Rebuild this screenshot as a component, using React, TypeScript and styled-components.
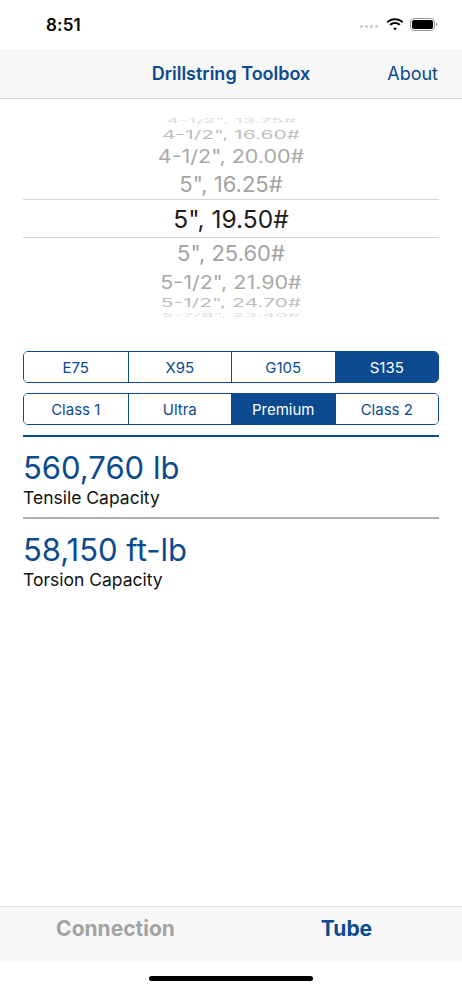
import React, { useState } from 'react'
import styled, { createGlobalStyle } from 'styled-components'

const BLUE = '#0b4a8e'

const GlobalStyle = createGlobalStyle`
    html, body {
        margin: 0;
        padding: 0;
        background: #ffffff;
    }
    body {
        font-family: Inter, "Noto Sans", "Liberation Sans", sans-serif;
        -webkit-font-smoothing: antialiased;
    }
`

const Screen = styled.div`
    width: 462px;
    height: 1000px;
    display: flex;
    flex-direction: column;
    background: #ffffff;
    overflow: hidden;
`

const StatusBar = styled.div`
    height: 49px;
    display: flex;
    align-items: center;
    justify-content: space-between;
    padding: 0 24px 0 46px;
    box-sizing: border-box;
`

const Clock = styled.span`
    font-size: 17px;
    font-weight: 600;
    color: #000;
    letter-spacing: 0.2px;
`

const StatusIcons = styled.div`
    display: flex;
    align-items: center;
    gap: 6px;
`

const Dot = styled.span`
    width: 3px;
    height: 3px;
    border-radius: 50%;
    background: #c8c8c8;
`

const Dots = styled.div`
    display: flex;
    gap: 2px;
    margin-right: 2px;
    margin-top: 3px;
`

const NavBar = styled.div`
    height: 49px;
    background: #f7f7f7;
    border-bottom: 1px solid #d6d6d6;
    display: grid;
    grid-template-columns: 1fr auto 1fr;
    align-items: center;
    padding: 0 24px;
`

const NavTitle = styled.div`
    grid-column: 2;
    font-size: 18px;
    font-weight: 600;
    color: ${BLUE};
`

const NavAction = styled.div`
    justify-self: end;
    font-size: 18px;
    color: ${BLUE};
`

const Picker = styled.div`
    margin: 16px 23px 0;
    display: flex;
    flex-direction: column;
    height: 205px;
`

const PickerRow = styled.div<{ h: number; size: number; sy: number; tone: string }>`
    height: ${({ h }) => h}px;
    display: flex;
    align-items: center;
    justify-content: center;
    font-size: ${({ size }) => size}px;
    color: ${({ tone }) => tone};
    transform: scaleY(${({ sy }) => sy});
    overflow: visible;
    white-space: nowrap;
`

const PickerSelected = styled.div`
    height: 38px;
    border-top: 1px solid #d4d4d4;
    border-bottom: 1px solid #d4d4d4;
    display: flex;
    align-items: center;
    justify-content: center;
    font-size: 24.5px;
    color: #1c1c1c;
`

const Segments = styled.div<{ top: number }>`
    margin: ${({ top }) => top}px 23px 0;
    height: 32px;
    display: grid;
    grid-template-columns: repeat(4, 1fr);
    border: 1px solid ${BLUE};
    border-radius: 5px;
    overflow: hidden;
    box-sizing: border-box;
`

const Segment = styled.div<{ active: boolean }>`
    display: flex;
    align-items: center;
    justify-content: center;
    font-size: 15px;
    color: ${({ active }) => (active ? '#ffffff' : BLUE)};
    background: ${({ active }) => (active ? BLUE : '#ffffff')};
    & + & {
        border-left: 1px solid ${BLUE};
    }
    cursor: pointer;
`

const Rule = styled.div<{ tone: string; top?: number }>`
    margin: ${({ top }) => top ?? 0}px 23px 0;
    height: 2px;
    background: ${({ tone }) => tone};
`

const Result = styled.div`
    padding: 13px 23px 9px;
`

const ResultValue = styled.div`
    font-size: 31px;
    color: ${BLUE};
    line-height: 36px;
`

const ResultLabel = styled.div`
    font-size: 17.5px;
    color: #111;
    margin-top: 1px;
`

const Spacer = styled.div`
    flex: 1;
`

const TabBar = styled.div`
    height: 55px;
    background: #f7f7f7;
    border-top: 1px solid #dcdcdc;
    display: grid;
    grid-template-columns: 1fr 1fr;
    align-items: start;
`

const Tab = styled.div<{ active: boolean }>`
    text-align: center;
    padding-top: 9px;
    font-size: 21px;
    font-weight: 700;
    color: ${({ active }) => (active ? BLUE : '#a3a3a3')};
`

const HomeArea = styled.div`
    height: 38px;
    display: flex;
    justify-content: center;
    padding-top: 14px;
    box-sizing: border-box;
`

const HomeIndicator = styled.div`
    width: 164px;
    height: 5px;
    border-radius: 3px;
    background: #000;
`

const above = [
    { label: '4-1/2", 13.75#', h: 12, size: 20, sy: 0.28, tone: '#dcdcdc' },
    { label: '4-1/2", 16.60#', h: 16, size: 21, sy: 0.55, tone: '#bdbdbd' },
    { label: '4-1/2", 20.00#', h: 26, size: 21.5, sy: 0.84, tone: '#a8a8a8' },
    { label: '5", 16.25#', h: 30, size: 22, sy: 0.96, tone: '#a2a2a2' },
]

const below = [
    { label: '5", 25.60#', h: 31, size: 22, sy: 0.96, tone: '#a2a2a2' },
    { label: '5-1/2", 21.90#', h: 26, size: 21.5, sy: 0.84, tone: '#a8a8a8' },
    { label: '5-1/2", 24.70#', h: 16, size: 21, sy: 0.55, tone: '#bdbdbd' },
    { label: '5-7/8", 23.40#', h: 9, size: 20, sy: 0.25, tone: '#e0e0e0' },
]

const grades = ['E75', 'X95', 'G105', 'S135']
const classes = ['Class 1', 'Ultra', 'Premium', 'Class 2']

const Wifi = () => (
    <svg width="18" height="13" viewBox="0 0 18 13">
        <path d="M9 2.2c2.7 0 5.2 1 7 2.8l1.3-1.4C15.1 1.4 12.2.2 9 .2S2.9 1.4.7 3.6L2 5c1.8-1.8 4.3-2.8 7-2.8z" fill="#000" />
        <path d="M9 6c1.6 0 3 .6 4.1 1.6l1.4-1.4C13.1 4.8 11.1 4 9 4s-4.1.8-5.5 2.2l1.4 1.4C6 6.6 7.4 6 9 6z" fill="#000" />
        <path d="M9 9.6c.7 0 1.3.3 1.8.7L9 12.4 7.2 10.3c.5-.4 1.1-.7 1.8-.7z" fill="#000" />
    </svg>
)

const Battery = () => (
    <svg width="28" height="13" viewBox="0 0 28 13">
        <rect x="0.5" y="0.5" width="24" height="12" rx="3.5" fill="none" stroke="#999" />
        <rect x="2" y="2" width="21" height="9" rx="2" fill="#000" />
        <path d="M26 4.5v4c.8-.3 1.3-1.1 1.3-2s-.5-1.7-1.3-2z" fill="#999" />
    </svg>
)

const App: React.FunctionComponent = () => {
    const [grade, setGrade] = useState('S135')
    const [klass, setKlass] = useState('Premium')
    const [tab, setTab] = useState('Tube')

    return (
        <Screen>
            <GlobalStyle />
            <StatusBar>
                <Clock>8:51</Clock>
                <StatusIcons>
                    <Dots>
                        <Dot />
                        <Dot />
                        <Dot />
                        <Dot />
                    </Dots>
                    <Wifi />
                    <Battery />
                </StatusIcons>
            </StatusBar>

            <NavBar>
                <NavTitle>Drillstring Toolbox</NavTitle>
                <NavAction>About</NavAction>
            </NavBar>

            <Picker>
                {above.map((row) => (
                    <PickerRow key={row.label} h={row.h} size={row.size} sy={row.sy} tone={row.tone}>
                        {row.label}
                    </PickerRow>
                ))}
                <PickerSelected>5", 19.50#</PickerSelected>
                {below.map((row) => (
                    <PickerRow key={row.label} h={row.h} size={row.size} sy={row.sy} tone={row.tone}>
                        {row.label}
                    </PickerRow>
                ))}
            </Picker>

            <Segments top={31}>
                {grades.map((g) => (
                    <Segment key={g} active={g === grade} onClick={() => setGrade(g)}>
                        {g}
                    </Segment>
                ))}
            </Segments>
            <Segments top={10}>
                {classes.map((c) => (
                    <Segment key={c} active={c === klass} onClick={() => setKlass(c)}>
                        {c}
                    </Segment>
                ))}
            </Segments>

            <Rule tone={BLUE} top={10} />
            <Result>
                <ResultValue>560,760 lb</ResultValue>
                <ResultLabel>Tensile Capacity</ResultLabel>
            </Result>
            <Rule tone="#b0b0b0" />
            <Result>
                <ResultValue>58,150 ft-lb</ResultValue>
                <ResultLabel>Torsion Capacity</ResultLabel>
            </Result>

            <Spacer />

            <TabBar>
                <Tab active={tab === 'Connection'} onClick={() => setTab('Connection')}>Connection</Tab>
                <Tab active={tab === 'Tube'} onClick={() => setTab('Tube')}>Tube</Tab>
            </TabBar>
            <HomeArea>
                <HomeIndicator />
            </HomeArea>
        </Screen>
    )
}

export default App
